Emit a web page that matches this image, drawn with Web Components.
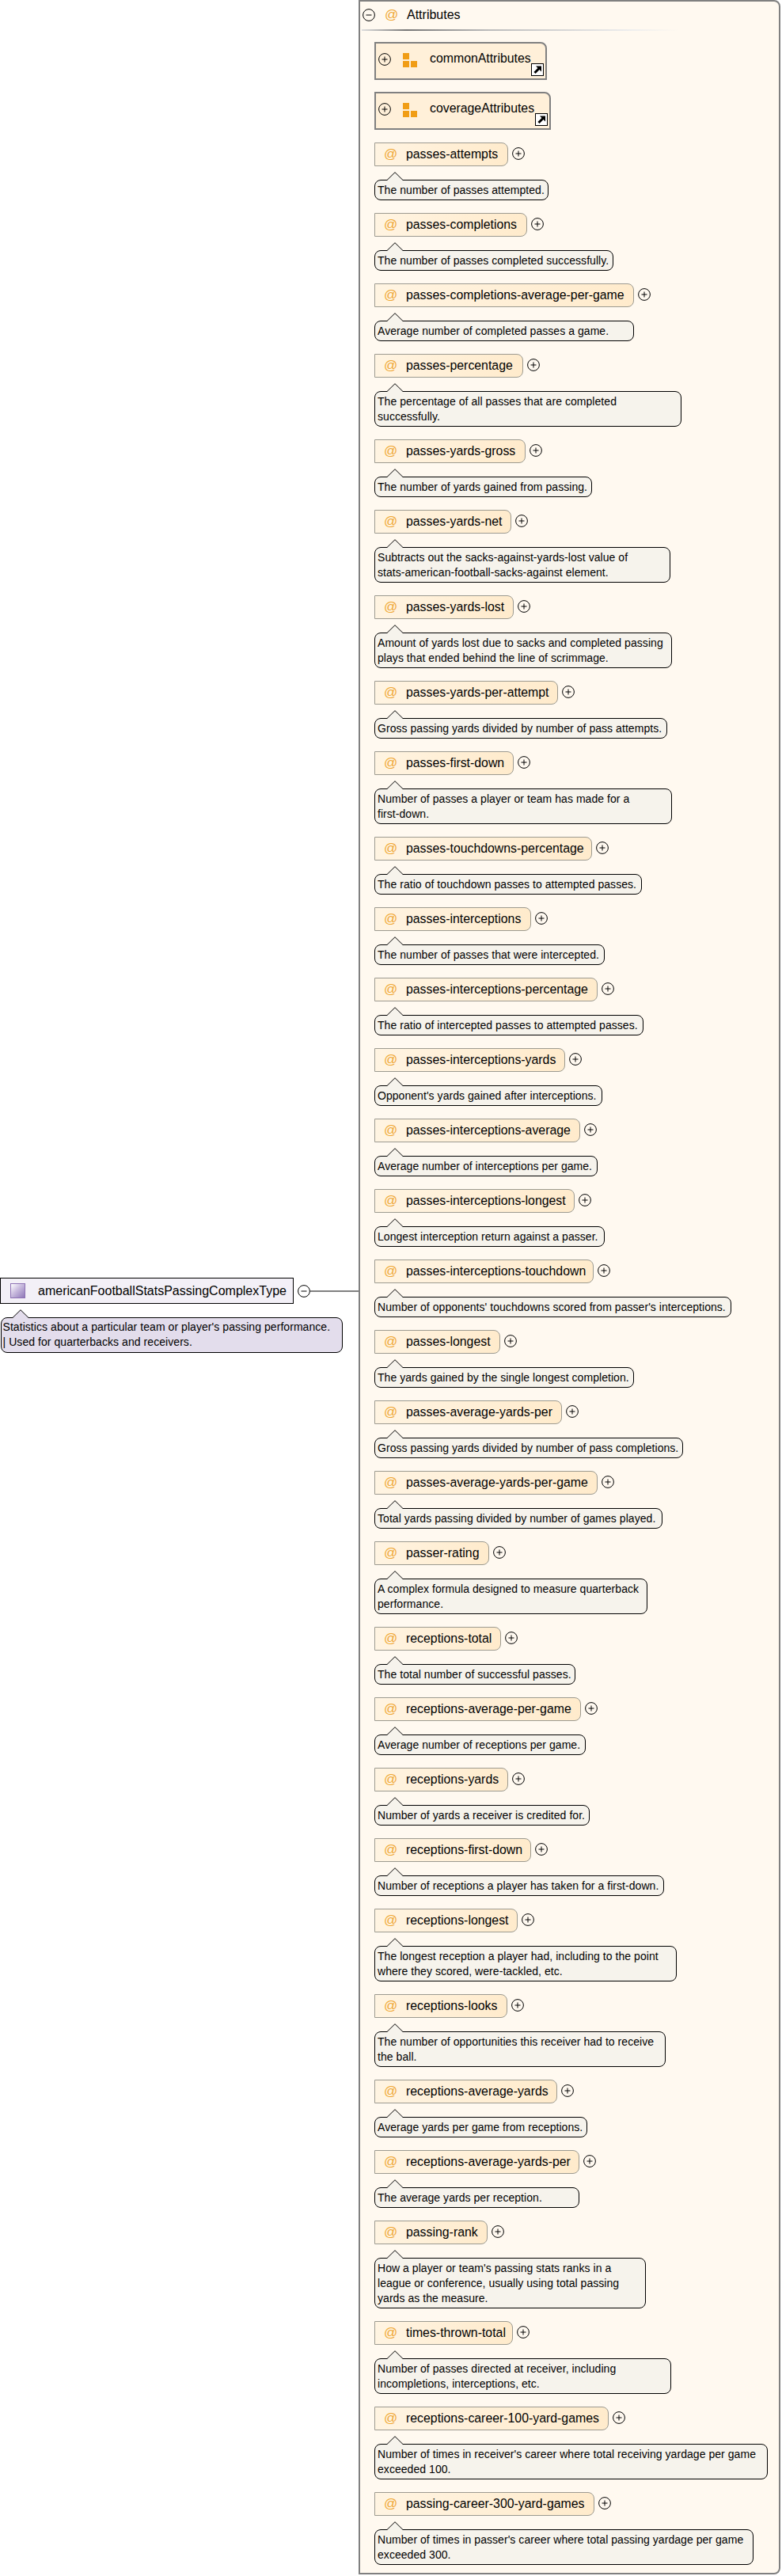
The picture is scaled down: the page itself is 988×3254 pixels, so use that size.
<!DOCTYPE html>
<html>
<head>
<meta charset="utf-8">
<title>americanFootballStatsPassingComplexType</title>
<style>
html, body { margin: 0; padding: 0; background: #fff; }
body { font-family: "Liberation Sans", Arial, sans-serif; color: #000; }
</style>
</head>
<body>

<schema-diagram>
  <type-node slot="root" name="americanFootballStatsPassingComplexType">
    Statistics about a particular team or player's passing performance.<br>| Used for quarterbacks and receivers.
  </type-node>

  <attr-panel title="Attributes">
    <group-ref name="commonAttributes" width="218" after="15"></group-ref>
    <group-ref name="coverageAttributes" width="223" after="16"></group-ref>

    <attr-item name="passes-attempts" pill="169" bubble="220">The number of passes attempted.</attr-item>
    <attr-item name="passes-completions" pill="193" bubble="302">The number of passes completed successfully.</attr-item>
    <attr-item name="passes-completions-average-per-game" pill="328" bubble="328">Average number of completed passes a game.</attr-item>
    <attr-item name="passes-percentage" pill="188" bubble="388">The percentage of all passes that are completed<br>successfully.</attr-item>
    <attr-item name="passes-yards-gross" pill="191" bubble="275">The number of yards gained from passing.</attr-item>
    <attr-item name="passes-yards-net" pill="173" bubble="374">Subtracts out the sacks-against-yards-lost value of<br>stats-american-football-sacks-against element.</attr-item>
    <attr-item name="passes-yards-lost" pill="176" bubble="376">Amount of yards lost due to sacks and completed passing<br>plays that ended behind the line of scrimmage.</attr-item>
    <attr-item name="passes-yards-per-attempt" pill="232" bubble="370">Gross passing yards divided by number of pass attempts.</attr-item>
    <attr-item name="passes-first-down" pill="176" bubble="376">Number of passes a player or team has made for a<br>first-down.</attr-item>
    <attr-item name="passes-touchdowns-percentage" pill="275" bubble="338">The ratio of touchdown passes to attempted passes.</attr-item>
    <attr-item name="passes-interceptions" pill="198" bubble="291">The number of passes that were intercepted.</attr-item>
    <attr-item name="passes-interceptions-percentage" pill="282" bubble="340">The ratio of intercepted passes to attempted passes.</attr-item>
    <attr-item name="passes-interceptions-yards" pill="241" bubble="288">Opponent's yards gained after interceptions.</attr-item>
    <attr-item name="passes-interceptions-average" pill="260" bubble="282">Average number of interceptions per game.</attr-item>
    <attr-item name="passes-interceptions-longest" pill="253" bubble="291">Longest interception return against a passer.</attr-item>
    <attr-item name="passes-interceptions-touchdown" pill="277" bubble="451">Number of opponents' touchdowns scored from passer's interceptions.</attr-item>
    <attr-item name="passes-longest" pill="159" bubble="328">The yards gained by the single longest completion.</attr-item>
    <attr-item name="passes-average-yards-per" pill="237" bubble="390">Gross passing yards divided by number of pass completions.</attr-item>
    <attr-item name="passes-average-yards-per-game" pill="282" bubble="364">Total yards passing divided by number of games played.</attr-item>
    <attr-item name="passer-rating" pill="145" bubble="345">A complex formula designed to measure quarterback<br>performance.</attr-item>
    <attr-item name="receptions-total" pill="160" bubble="254">The total number of successful passes.</attr-item>
    <attr-item name="receptions-average-per-game" pill="261" bubble="267">Average number of receptions per game.</attr-item>
    <attr-item name="receptions-yards" pill="169" bubble="272">Number of yards a receiver is credited for.</attr-item>
    <attr-item name="receptions-first-down" pill="198" bubble="366">Number of receptions a player has taken for a first-down.</attr-item>
    <attr-item name="receptions-longest" pill="181" bubble="382">The longest reception a player had, including to the point<br>where they scored, were-tackled, etc.</attr-item>
    <attr-item name="receptions-looks" pill="168" bubble="368">The number of opportunities this receiver had to receive<br>the ball.</attr-item>
    <attr-item name="receptions-average-yards" pill="231" bubble="269">Average yards per game from receptions.</attr-item>
    <attr-item name="receptions-average-yards-per" pill="259" bubble="259">The average yards per reception.</attr-item>
    <attr-item name="passing-rank" pill="143" bubble="343">How a player or team's passing stats ranks in a<br>league or conference, usually using total passing<br>yards as the measure.</attr-item>
    <attr-item name="times-thrown-total" pill="175" bubble="375">Number of passes directed at receiver, including<br>incompletions, interceptions, etc.</attr-item>
    <attr-item name="receptions-career-100-yard-games" pill="296" bubble="497">Number of times in receiver's career where total receiving yardage per game<br>exceeded 100.</attr-item>
    <attr-item name="passing-career-300-yard-games" pill="278" bubble="479">Number of times in passer's career where total passing yardage per game<br>exceeded 300.</attr-item>
  </attr-panel>
</schema-diagram>

<script>
// shared little svg bits
const plusIcon = `<svg width="16" height="16" viewBox="0 0 16 16"><circle cx="8" cy="8" r="7.4" fill="none" stroke="#000" stroke-width="1"/><path d="M4.5 8h7M8 4.5v7" stroke="#000" stroke-width="1"/></svg>`;
const minusIcon = `<svg width="16" height="16" viewBox="0 0 16 16"><circle cx="8" cy="8" r="7.4" fill="none" stroke="#000" stroke-width="1"/><path d="M4.5 8h7" stroke="#000" stroke-width="1"/></svg>`;

// notch on top of a doc bubble, the fill runs over the bubble's border so the line stays open
const notch = (fill) => `<svg class="notch" width="22" height="12" viewBox="0 0 22 12"><path d="M1 12 L1 10.5 L11 .7 L21 10.5 L21 12z" fill="${fill}"/><path d="M1 10.5 L11 .7 L21 10.5" fill="none" stroke="#000" stroke-width="1"/></svg>`;

class SchemaDiagram extends HTMLElement {
  constructor() {
    super();
    this.attachShadow({ mode: "open" });
    this.shadowRoot.innerHTML = `
      <style>
        :host { display: flex; width: 988px; height: 3254px; align-items: flex-start; }
        .left { width: 453px; flex: none; padding-top: 1614px; box-sizing: border-box; }
      </style>
      <div class="left"><slot name="root"></slot></div>
      <slot></slot>`;
  }
}

class TypeNode extends HTMLElement {
  constructor() {
    super();
    this.attachShadow({ mode: "open" });
    this.shadowRoot.innerHTML = `
      <style>
        :host { display: block; font-family: "Liberation Sans", Arial, sans-serif; }
        .row { display: flex; align-items: center; }
        .box { width: 371px; height: 33px; box-sizing: border-box; border: 1px solid #000; background: #F3F0F7;
               display: flex; align-items: center; padding-left: 12px; font-size: 16px; }
        .ico { width: 19px; height: 19px; box-sizing: border-box; border: 1px solid #8E72B4; flex: none; margin-right: 16px;
               background: linear-gradient(135deg, #fff 0%, #C9BBDE 45%, #8F78B8 100%); }
        .name { white-space: nowrap; }
        .toggle { display: flex; margin-left: 5px; }
        .line { flex: 1; height: 2px; background: #808080; }
        .doc { position: relative; margin: 17px 0 0 1px; width: 432px; height: 45px; box-sizing: border-box; background: #E3DDEC;
               border: 1px solid #000; border-radius: 8px; padding: 2px 1.5px; font-size: 14px; line-height: 19px;
               letter-spacing: .06px; white-space: nowrap; }
        .notch { position: absolute; left: 13px; top: -11px; }
      </style>
      <div class="row">
        <div class="box"><span class="ico"></span><span class="name">${this.getAttribute("name")}</span></div>
        <span class="toggle">${minusIcon}</span>
        <span class="line"></span>
      </div>
      <div class="doc">${notch("#E3DDEC")}<slot></slot></div>`;
  }
}

class AttrPanel extends HTMLElement {
  constructor() {
    super();
    this.attachShadow({ mode: "open" });
    this.shadowRoot.innerHTML = `
      <style>
        :host { display: block; width: 533px; height: 3252px; box-sizing: border-box; flex: none; background: #FFF9F0;
                border: 2px solid #808080; border-radius: 0 8px 8px 0;
                font-family: "Liberation Sans", Arial, sans-serif; }
        .head { height: 37px; margin-top: -2px; box-sizing: border-box; display: flex; align-items: center; padding-left: 3px; font-size: 16px; }
        .at { color: #EFA733; width: 28px; margin-left: 12px; font-size: 17px; }
        .rule { height: 2px; width: 400px; margin-left: 2px;
                background: linear-gradient(90deg, #ddd 0%, #777 14%, #bbb 40%, #eee 85%, #FFF9F0 100%); }
        .body { padding: 14px 0 0 18px; display: flex; flex-direction: column; align-items: flex-start; }
      </style>
      <div class="head">${minusIcon}<span class="at">@</span><span>${this.getAttribute("title")}</span></div>
      <div class="rule"></div>
      <div class="body"><slot></slot></div>`;
  }
}

class GroupRef extends HTMLElement {
  constructor() {
    super();
    this.attachShadow({ mode: "open" });
    this.shadowRoot.innerHTML = `
      <style>
        :host { display: block; margin-bottom: ${this.getAttribute("after")}px; }
        .box { position: relative; width: ${this.getAttribute("width")}px; height: 48px; box-sizing: border-box;
               border: 2px solid #808080; border-radius: 0 8px 0 0; background: #FFF0D9;
               display: flex; align-items: flex-start; font-size: 15.85px; padding: 12px 0 0 3px; }
        .plus { display: flex; }
        .squares { width: 18px; height: 18px; margin: 0 16px 0 15px; flex: none; }
        .name { white-space: nowrap; line-height: 18px; margin-top: -2px; }
        .link { position: absolute; right: 2px; bottom: 3px; }
      </style>
      <div class="box">
        <span class="plus">${plusIcon}</span>
        <svg class="squares" viewBox="0 0 18 18"><g fill="#F09D16"><rect x="0" y="0" width="8" height="8"/><rect x="0" y="10" width="8" height="8"/><rect x="10" y="10" width="8" height="8"/></g></svg>
        <span class="name">${this.getAttribute("name")}</span>
        <svg class="link" width="16" height="16" viewBox="0 0 16 16"><rect x=".5" y=".5" width="15" height="15" fill="#fff" stroke="#000"/><path d="M6 3.5h7v7l-2.4-2.4-5 5-2.2-2.2 5-5z" fill="#000"/></svg>
      </div>`;
  }
}

class AttrItem extends HTMLElement {
  constructor() {
    super();
    this.attachShadow({ mode: "open" });
    this.shadowRoot.innerHTML = `
      <style>
        :host { display: block; margin-bottom: 16px; }
        .row { display: flex; align-items: flex-start; }
        .pill { width: ${this.getAttribute("pill")}px; height: 30px; box-sizing: border-box; flex: none;
                border: 1px solid #9C9A90; border-radius: 0 8px 8px 0;
                background: linear-gradient(90deg, #FFF4E2, #FFEBCC);
                display: flex; align-items: center; padding-left: 11px; font-size: 15.85px; white-space: nowrap; }
        .at { color: #EFA733; width: 28px; flex: none; font-size: 17px; }
        .toggle { display: flex; margin: 6px 0 0 5px; }
        .doc { position: relative; margin-top: 17px; width: ${this.getAttribute("bubble")}px; box-sizing: border-box;
               background: #F6F3EC; border: 1px solid #000; border-radius: 8px; padding: 2.5px 3px;
               font-size: 14px; line-height: 19px; letter-spacing: .05px; white-space: nowrap; }
        .notch { position: absolute; left: 14px; top: -11px; }
      </style>
      <div class="row">
        <div class="pill"><span class="at">@</span><span>${this.getAttribute("name")}</span></div>
        <span class="toggle">${plusIcon}</span>
      </div>
      <div class="doc">${notch("#F6F3EC")}<slot></slot></div>`;
  }
}

customElements.define("schema-diagram", SchemaDiagram);
customElements.define("type-node", TypeNode);
customElements.define("attr-panel", AttrPanel);
customElements.define("group-ref", GroupRef);
customElements.define("attr-item", AttrItem);
</script>
</body>
</html>
